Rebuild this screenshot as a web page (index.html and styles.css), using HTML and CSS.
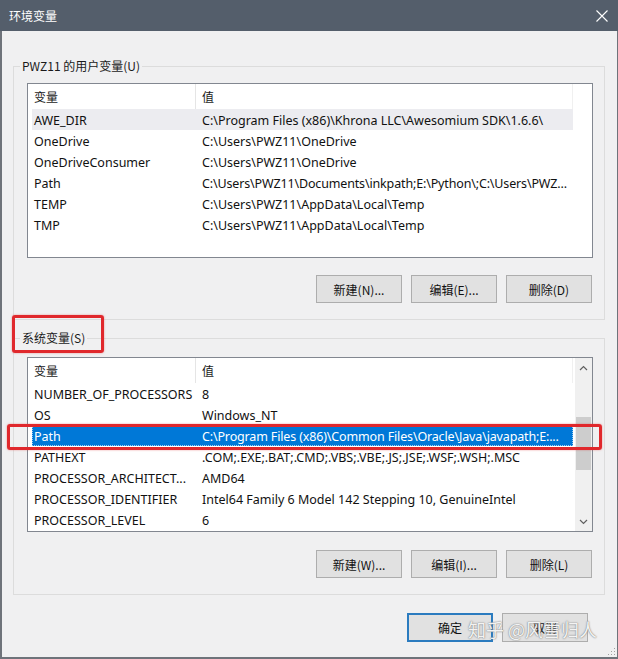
FILE: index.html
```html
<!DOCTYPE html>
<html lang="zh-CN">
<head>
<meta charset="utf-8">
<title>环境变量</title>
<link rel="stylesheet" href="styles.css">
</head>
<body>
<div class="window">
  <div class="titlebar">
    <span class="title">环境变量</span>
    <svg class="close" width="12" height="12" viewBox="0 0 12 12"><path d="M0.5 0.5 L11.5 11.5 M11.5 0.5 L0.5 11.5" stroke="#fff" stroke-width="1.1" fill="none"/></svg>
  </div>
  <div class="content">
    <div class="group group-user">
      <div class="legend">PWZ11 的用户变量(U)</div>
      <div class="list list-user">
        <div class="header">
          <div class="hcell c1">变量</div>
          <div class="hcell c2">值</div>
        </div>
        <div class="row hover"><div class="cell c1">AWE_DIR</div><div class="cell c2">C:\Program Files (x86)\Khrona LLC\Awesomium SDK\1.6.6\</div></div>
        <div class="row"><div class="cell c1">OneDrive</div><div class="cell c2">C:\Users\PWZ11\OneDrive</div></div>
        <div class="row"><div class="cell c1">OneDriveConsumer</div><div class="cell c2">C:\Users\PWZ11\OneDrive</div></div>
        <div class="row"><div class="cell c1">Path</div><div class="cell c2 tight">C:\Users\PWZ11\Documents\inkpath;E:\Python\;C:\Users\PWZ...</div></div>
        <div class="row"><div class="cell c1">TEMP</div><div class="cell c2">C:\Users\PWZ11\AppData\Local\Temp</div></div>
        <div class="row"><div class="cell c1">TMP</div><div class="cell c2">C:\Users\PWZ11\AppData\Local\Temp</div></div>
      </div>
      <div class="buttons">
        <button class="btn">新建(N)...</button>
        <button class="btn">编辑(E)...</button>
        <button class="btn">删除(D)</button>
      </div>
    </div>

    <div class="group group-sys">
      <div class="legend">系统变量(S)</div>
      <div class="list list-sys">
        <div class="list-body">
          <div class="header">
            <div class="hcell c1">变量</div>
            <div class="hcell c2">值</div>
          </div>
          <div class="row"><div class="cell c1">NUMBER_OF_PROCESSORS</div><div class="cell c2">8</div></div>
          <div class="row"><div class="cell c1">OS</div><div class="cell c2">Windows_NT</div></div>
          <div class="row selected"><div class="cell c1">Path</div><div class="cell c2 tight">C:\Program Files (x86)\Common Files\Oracle\Java\javapath;E:...</div></div>
          <div class="row"><div class="cell c1">PATHEXT</div><div class="cell c2">.COM;.EXE;.BAT;.CMD;.VBS;.VBE;.JS;.JSE;.WSF;.WSH;.MSC</div></div>
          <div class="row"><div class="cell c1">PROCESSOR_ARCHITECT...</div><div class="cell c2">AMD64</div></div>
          <div class="row"><div class="cell c1">PROCESSOR_IDENTIFIER</div><div class="cell c2">Intel64 Family 6 Model 142 Stepping 10, GenuineIntel</div></div>
          <div class="row"><div class="cell c1">PROCESSOR_LEVEL</div><div class="cell c2">6</div></div>
        </div>
        <div class="scrollbar">
          <svg class="arrow" width="9" height="6" viewBox="0 0 9 6"><path d="M1 5 L4.5 1.5 L8 5" stroke="#606060" stroke-width="1.2" fill="none"/></svg>
          <div class="track"><div class="thumb"></div></div>
          <svg class="arrow" width="9" height="6" viewBox="0 0 9 6"><path d="M1 1 L4.5 4.5 L8 1" stroke="#606060" stroke-width="1.2" fill="none"/></svg>
        </div>
      </div>
      <div class="buttons">
        <button class="btn">新建(W)...</button>
        <button class="btn">编辑(I)...</button>
        <button class="btn">删除(L)</button>
      </div>
    </div>

    <div class="dialog-buttons">
      <button class="btn btn-default">确定</button>
      <button class="btn">取消</button>
    </div>
  </div>

  <div class="mark mark-legend"></div>
  <div class="mark mark-row"></div>
  <div class="watermark">知乎 @风雪归人</div>
  <svg class="grip" width="9" height="9" viewBox="0 0 9 9">
    <g fill="#a0a0a0"><rect x="7" y="1" width="1" height="1"/><rect x="4" y="4" width="1" height="1"/><rect x="7" y="4" width="1" height="1"/><rect x="1" y="7" width="1" height="1"/><rect x="4" y="7" width="1" height="1"/><rect x="7" y="7" width="1" height="1"/></g>
  </svg>
</div>
</body>
</html>
```

FILE: styles.css
```css
* { box-sizing: border-box; }
html, body { margin: 0; padding: 0; }
body {
  width: 618px;
  height: 659px;
  font-family: "Noto Sans", "Noto Sans CJK SC", sans-serif;
  font-size: 12px;
  color: #000;
  background: #f0f0f0;
  overflow: hidden;
}
.window {
  position: relative;
  width: 618px;
  height: 659px;
  background: #f0f0f1;
  border-left: 2px solid #6e737a;
  border-right: 1px solid #6e737a;
  border-bottom: 2px solid #6e737a;
  display: flex;
  flex-direction: column;
}
.titlebar {
  height: 31px;
  margin: 0 -1px 0 -2px;
  background: #545e6b;
  display: flex;
  align-items: center;
  justify-content: space-between;
  padding: 0 10px 0 9px;
  color: #fff;
}
.title {
  font-family: "Noto Sans CJK SC", sans-serif;
  font-size: 12px;
  line-height: 16px;
}
.close { display: block; }
.content {
  flex: 1;
  display: flex;
  flex-direction: column;
}
.group {
  border: 1px solid #dcdcdc;
  margin: 0 12px 0 11px;
  display: flex;
  flex-direction: column;
  padding: 0 11px 0 13px;
}
.group-user { margin-top: 35px; padding-bottom: 16px; }
.group-sys { margin-top: 18px; padding-bottom: 16px; }
.legend {
  align-self: flex-start;
  margin: -9px 0 0 -7px;
  padding: 0 2px;
  line-height: 16px;
  height: 16px;
  background: #f0f0f1;
  font-family: "Noto Sans CJK SC", "Noto Sans", sans-serif;
  font-size: 12px;
  color: #1a1a1a;
}
.list {
  height: 175px;
  border: 1px solid #828790;
  background: #fff;
  display: flex;
}
.list-user { margin-top: 9px; flex-direction: column; padding-left: 0; }
.list-sys { margin-top: 11px; }
.list-body { flex: 1; display: flex; flex-direction: column; }
.header {
  height: 25px;
  display: flex;
  width: 545px;
}
.hcell {
  display: flex;
  align-items: center;
  padding-left: 6px;
  font-family: "Noto Sans CJK SC", sans-serif;
  color: #1a1a1a;
}
.hcell.c1 { width: 168px; border-right: 1px solid #e5e5e5; }
.hcell.c2 { width: 377px; border-right: 1px solid #f0f0f0; }
.row {
  height: 21px;
  margin-left: 4px;
  width: 541px;
  display: flex;
  align-items: center;
  white-space: nowrap;
  color: #111;
  font-size: 12.5px;
}
.cell { overflow: hidden; padding-top: 2px; line-height: 16px; }
.cell.c1 { width: 163px; padding-left: 2px; }
.cell.c2 { width: 378px; padding-left: 7px; }
.cell.tight { letter-spacing: -0.15px; }
.row.hover { background: #ececf0; }
.row.selected {
  background: #0078d7;
  color: #fff;
  outline: 1px dotted #9ccaf0;
  outline-offset: -1px;
}
.scrollbar {
  width: 17px;
  margin-left: auto;
  background: #f0f0f0;
  display: flex;
  flex-direction: column;
  align-items: center;
}
.scrollbar .arrow { margin: 7px 0 5px; }
.scrollbar .arrow:last-child { margin: 5px 0 6px; }
.track { flex: 1; width: 100%; padding: 0 1px; }
.thumb {
  margin-top: 41px;
  height: 53px;
  background: #cdcdcd;
}
.buttons {
  display: flex;
  justify-content: flex-end;
  gap: 9px;
  margin-top: 17px;
  padding-right: 1px;
}
.group-sys .buttons { margin-top: 18px; }
.btn {
  width: 86px;
  height: 28px;
  border: 1px solid #adadad;
  background: #e1e1e1;
  font-family: "Noto Sans CJK SC", "Noto Sans", sans-serif;
  font-size: 12px;
  color: #111;
  padding: 0;
}
.dialog-buttons {
  display: flex;
  justify-content: flex-end;
  gap: 9px;
  margin-top: 18px;
  padding-right: 29px;
}
.btn-default {
  border: 2px solid #2b7bbf;
}
.dialog-buttons .btn { height: 29px; }
.mark {
  position: absolute;
  border: 3px solid #e0282c;
  border-radius: 3px;
  box-shadow: 0 0 2px rgba(224, 40, 44, 0.5);
}
.mark-legend { left: 10px; top: 315px; width: 92px; height: 38px; }
.mark-row { left: 5px; top: 424px; width: 595px; height: 26px; }
.watermark {
  position: absolute;
  left: 466px;
  top: 617px;
  font-family: "Noto Sans CJK SC", sans-serif;
  font-size: 18px;
  line-height: 24px;
  color: rgba(255, 255, 255, 0.92);
  text-shadow: 0 0 1px #777, 0 0 2px #999;
  white-space: nowrap;
}
.grip { position: absolute; right: 1px; bottom: 1px; }
```
